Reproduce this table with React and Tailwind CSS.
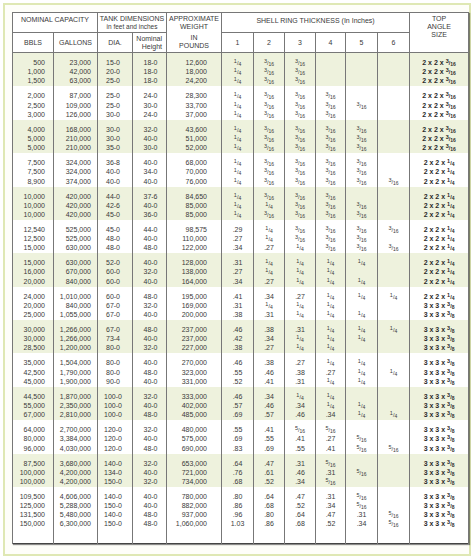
import React from 'react';

const groups = [
  [
    ['500', '23,000', '15-0', '18-0', '12,600', '1/4', '3/16', '3/16', '', '', '', '2x2x3/16'],
    ['1,000', '42,000', '20-0', '18-0', '18,000', '1/4', '3/16', '3/16', '', '', '', '2x2x3/16'],
    ['1,500', '63,000', '25-0', '18-0', '24,200', '1/4', '3/16', '3/16', '', '', '', '2x2x3/16'],
  ],
  [
    ['2,000', '87,000', '25-0', '24-0', '28,300', '1/4', '3/16', '3/16', '3/16', '', '', '2x2x3/16'],
    ['2,500', '109,000', '25-0', '30-0', '33,700', '1/4', '3/16', '3/16', '3/16', '3/16', '', '2x2x3/16'],
    ['3,000', '126,000', '30-0', '24-0', '37,000', '1/4', '3/16', '3/16', '3/16', '', '', '2x2x3/16'],
  ],
  [
    ['4,000', '168,000', '30-0', '32-0', '43,600', '1/4', '3/16', '3/16', '3/16', '3/16', '', '2x2x3/16'],
    ['5,000', '210,000', '30-0', '40-0', '51,000', '1/4', '3/16', '3/16', '3/16', '3/16', '', '2x2x3/16'],
    ['5,000', '210,000', '35-0', '30-0', '52,000', '1/4', '3/16', '3/16', '3/16', '3/16', '', '2x2x3/16'],
  ],
  [
    ['7,500', '324,000', '36-8', '40-0', '68,000', '1/4', '3/16', '3/16', '3/16', '3/16', '', '2x2x1/4'],
    ['7,500', '324,000', '40-0', '34-0', '70,000', '1/4', '3/16', '3/16', '3/16', '3/16', '', '2x2x1/4'],
    ['8,900', '374,000', '40-0', '40-0', '76,000', '1/4', '3/16', '3/16', '3/16', '3/16', '3/16', '2x2x1/4'],
  ],
  [
    ['10,000', '420,000', '44-0', '37-6', '84,650', '1/4', '3/16', '3/16', '3/16', '', '', '2x2x1/4'],
    ['10,000', '420,000', '42-6', '40-0', '85,000', '1/4', '1/4', '3/16', '3/16', '3/16', '', '2x2x1/4'],
    ['10,000', '420,000', '45-0', '36-0', '85,000', '1/4', '3/16', '3/16', '3/16', '3/16', '', '2x2x1/4'],
  ],
  [
    ['12,540', '525,000', '45-0', '44-0', '98,575', '.29', '1/4', '3/16', '3/16', '3/16', '3/16', '2x2x1/4'],
    ['12,500', '525,000', '48-0', '40-0', '110,000', '.27', '1/4', '3/16', '3/16', '3/16', '', '2x2x1/4'],
    ['15,000', '630,000', '48-0', '48-0', '122,000', '.34', '.27', '1/4', '3/16', '3/16', '3/16', '2x2x1/4'],
  ],
  [
    ['15,000', '630,000', '52-0', '40-0', '128,000', '.31', '1/4', '1/4', '1/4', '1/4', '', '2x2x1/4'],
    ['16,000', '670,000', '60-0', '32-0', '138,000', '.27', '1/4', '1/4', '1/4', '', '', '2x2x1/4'],
    ['20,000', '840,000', '60-0', '40-0', '164,000', '.34', '.27', '1/4', '1/4', '1/4', '', '2x2x1/4'],
  ],
  [
    ['24,000', '1,010,000', '60-0', '48-0', '195,000', '.41', '.34', '.27', '1/4', '1/4', '1/4', '2x2x1/4'],
    ['20,000', '840,000', '67-0', '32-0', '169,000', '.31', '1/4', '1/4', '1/4', '', '', '3x3x3/8'],
    ['25,000', '1,055,000', '67-0', '40-0', '200,000', '.38', '.31', '1/4', '1/4', '1/4', '', '3x3x3/8'],
  ],
  [
    ['30,000', '1,266,000', '67-0', '48-0', '237,000', '.46', '.38', '.31', '1/4', '1/4', '1/4', '3x3x3/8'],
    ['30,000', '1,266,000', '73-4', '40-0', '237,000', '.42', '.34', '1/4', '1/4', '1/4', '', '3x3x3/8'],
    ['28,500', '1,200,000', '80-0', '32-0', '227,000', '.38', '.27', '1/4', '1/4', '', '', '3x3x3/8'],
  ],
  [
    ['35,000', '1,504,000', '80-0', '40-0', '270,000', '.46', '.38', '.27', '1/4', '1/4', '', '3x3x3/8'],
    ['42,500', '1,790,000', '80-0', '48-0', '323,000', '.55', '.46', '.38', '.27', '1/4', '1/4', '3x3x3/8'],
    ['45,000', '1,900,000', '90-0', '40-0', '331,000', '.52', '.41', '.31', '1/4', '1/4', '', '3x3x3/8'],
  ],
  [
    ['44,500', '1,870,000', '100-0', '32-0', '333,000', '.46', '.34', '1/4', '1/4', '', '', '3x3x3/8'],
    ['55,000', '2,350,000', '100-0', '40-0', '402,000', '.57', '.46', '.34', '1/4', '1/4', '', '3x3x3/8'],
    ['67,000', '2,810,000', '100-0', '48-0', '485,000', '.69', '.57', '.46', '.34', '1/4', '1/4', '3x3x3/8'],
  ],
  [
    ['64,000', '2,700,000', '120-0', '32-0', '480,000', '.55', '.41', '5/16', '5/16', '', '', '3x3x3/8'],
    ['80,000', '3,384,000', '120-0', '40-0', '575,000', '.69', '.55', '.41', '.27', '5/16', '', '3x3x3/8'],
    ['96,000', '4,030,000', '120-0', '48-0', '690,000', '.83', '.69', '.55', '.41', '5/16', '5/16', '3x3x3/8'],
  ],
  [
    ['87,500', '3,680,000', '140-0', '32-0', '653,000', '.64', '.47', '.31', '5/16', '', '', '3x3x3/8'],
    ['100,000', '4,200,000', '134-0', '40-0', '721,000', '.76', '.61', '.46', '.31', '5/16', '', '3x3x3/8'],
    ['100,000', '4,200,000', '150-0', '32-0', '734,000', '.68', '.52', '.34', '5/16', '', '', '3x3x3/8'],
  ],
  [
    ['109,500', '4,606,000', '140-0', '40-0', '780,000', '.80', '.64', '.47', '.31', '5/16', '', '3x3x3/8'],
    ['125,000', '5,288,000', '150-0', '40-0', '882,000', '.86', '.68', '.52', '.34', '5/16', '', '3x3x3/8'],
    ['131,500', '5,480,000', '140-0', '48-0', '937,000', '.96', '.80', '.64', '.47', '.31', '5/16', '3x3x3/8'],
    ['150,000', '6,300,000', '150-0', '48-0', '1,060,000', '1.03', '.86', '.68', '.52', '.34', '5/16', '3x3x3/8'],
  ],
];

const cellAlign = [
  'text-right pr-[8px]',
  'text-right pr-[6px]',
  'text-center pr-[4px]',
  'text-center pl-[2px]',
  'text-right pr-[14px]',
  'text-center',
  'text-center',
  'text-center',
  'text-center',
  'text-center',
  'text-center',
  'text-center font-bold text-[#2a2a2a]',
];

function Frac({ value }) {
  const [n, d] = value.split('/');
  return (
    <span className="inline-block whitespace-nowrap">
      <span className="relative -top-[2px] text-[5.5px]">{n}</span>
      <span className="text-[5.5px]">/</span>
      <span className="relative top-[1px] text-[5px]">{d}</span>
    </span>
  );
}

function Value({ value, col }) {
  if (!value) return '\u00a0';
  if (col === 11) {
    const [a, b, f] = value.split('x');
    return (
      <>
        {a} x {b} x <Frac value={f} />
      </>
    );
  }
  if (value.includes('/')) return <Frac value={value} />;
  return value;
}

export default function App() {
  const widths = [41, 44, 35, 34, 55, 32, 31, 31, 30, 32, 32, 59];
  const th = 'border border-[#777] font-normal text-[#3a3a3a]';

  return (
    <div className="w-[474px] h-[560px] bg-white pl-[3px] pt-[3px]">
      <div
        className="w-[468px] h-[553px] border-2 border-[#dfe8b4] bg-[#fefef9] pl-[7px] pt-[7px]"
        style={{ fontFamily: '"Liberation Sans Narrow", "Liberation Sans", Arial, sans-serif' }}
      >
        <table className="table-fixed border-collapse w-[456px] h-[532px] border border-[#444] bg-white text-[7px] leading-none text-[#3a3a3a] shadow-[1px_1px_1px_rgba(0,0,0,0.45)]">
          <colgroup>
            {widths.map((w, i) => (
              <col key={i} style={{ width: w }} />
            ))}
          </colgroup>
          <thead className="uppercase">
            <tr className="h-[20px]">
              <th colSpan={2} className={th + ' align-top pt-[3px]'}>NOMINAL CAPACITY</th>
              <th colSpan={2} className={th + ' align-top pt-[2px]'}>
                <div>TANK DIMENSIONS</div>
                <div className="normal-case text-[6.5px] mt-[2px]">in feet and inches</div>
              </th>
              <th rowSpan={2} className={th + ' align-top pt-[2px] leading-[8px]'}>
                <div>APPROXIMATE</div>
                <div>WEIGHT</div>
                <div className="mt-[3px]">IN</div>
                <div>POUNDS</div>
              </th>
              <th colSpan={6} className={th + ' align-top pt-[4px]'}>
                SHELL RING THICKNESS <span className="normal-case">(In Inches)</span>
              </th>
              <th rowSpan={2} className={th + ' align-top pt-[2px] leading-[8px]'}>
                <div>TOP</div>
                <div>ANGLE</div>
                <div>SIZE</div>
              </th>
            </tr>
            <tr className="h-[20px]">
              <th className={th}>BBLS</th>
              <th className={th}>GALLONS</th>
              <th className={th}>DIA.</th>
              <th className={th + ' normal-case leading-[8px] text-right pr-[4px]'}>
                Nominal
                <br />
                Height
              </th>
              {['1', '2', '3', '4', '5', '6'].map((n) => (
                <th key={n} className={th}>{n}</th>
              ))}
            </tr>
          </thead>
          {groups.map((group, gi) => {
            const last = gi === groups.length - 1;
            return (
              <tbody key={gi} className={gi % 2 === 0 ? 'bg-[#eef2dd]' : 'bg-white'}>
                <tr className={last ? 'h-full' : ''}>
                  {widths.map((_, ci) => (
                    <td
                      key={ci}
                      className={`border-x border-[#777] align-top pt-[5px] ${last ? 'pb-[14px]' : 'pb-[0.6px]'} ${cellAlign[ci]}`}
                    >
                      {group.map((row, ri) => (
                        <div key={ri} className="h-[9.2px] leading-[9.2px] whitespace-nowrap">
                          <Value value={row[ci]} col={ci} />
                        </div>
                      ))}
                    </td>
                  ))}
                </tr>
              </tbody>
            );
          })}
        </table>
      </div>
    </div>
  );
}
